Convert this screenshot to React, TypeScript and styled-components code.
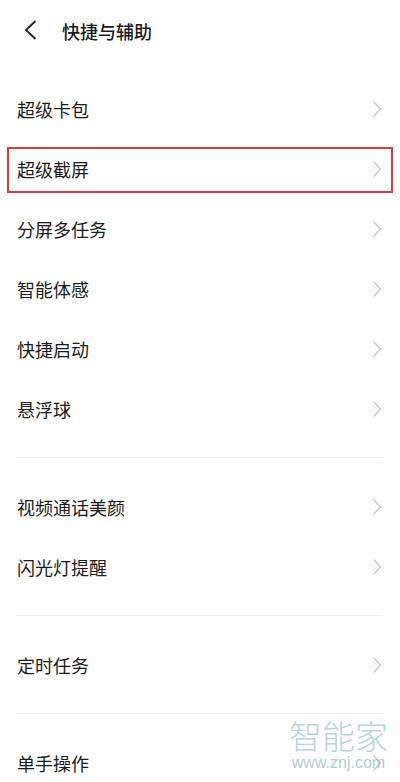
import styled, { createGlobalStyle, css } from "styled-components";

const GlobalStyle = createGlobalStyle`
  html, body {
    margin: 0;
    padding: 0;
    background: #ffffff;
    overflow: hidden;
  }
  body {
    font-family: "Noto Sans CJK SC", "Noto Sans", sans-serif;
  }
`;

const Page = styled.div`
  position: relative;
  width: 400px;
  height: 782px;
  overflow: hidden;
  background: #ffffff;
`;

const Header = styled.div`
  height: 60px;
  display: flex;
  align-items: center;
  padding-left: 24px;
  gap: 25px;
`;

const Title = styled.div`
  font-size: 18px;
  font-weight: 500;
  color: #1a1a1a;
  line-height: 1;
  margin-top: 1px;
`;

const Group = styled.div`
  padding: 19px 0 18px;
`;

const Divider = styled.div`
  height: 1px;
  margin: 0 17px 0 16px;
  background: #f0f0f0;
`;

const Row = styled.div<{ $highlight?: boolean }>`
  position: relative;
  height: 60px;
  display: flex;
  align-items: center;
  justify-content: space-between;
  padding: 0 18px 0 17px;

  ${(p) =>
    p.$highlight &&
    css`
      &::after {
        content: "";
        position: absolute;
        left: 7px;
        right: 7px;
        top: 8px;
        bottom: 6px;
        border: 2.5px solid #e5383d;
      }
    `}
`;

const Label = styled.span`
  font-size: 18px;
  color: #1c1c1c;
  line-height: 1;
`;

const Watermark = styled.div`
  position: absolute;
  left: 289px;
  top: 716px;
  display: flex;
  flex-direction: column;
  align-items: center;
  pointer-events: none;
`;

const WatermarkName = styled.div`
  font-family: "Noto Sans CJK SC", sans-serif;
  font-weight: 300;
  font-size: 33px;
  line-height: 38px;
  color: rgba(170, 205, 210, 0.85);
`;

const WatermarkUrl = styled.div`
  font-family: "Liberation Sans", Arial, sans-serif;
  font-size: 16px;
  line-height: 16px;
  margin-top: 1px;
  color: rgba(160, 195, 200, 0.85);
`;

const Back = () => (
  <svg width="13" height="20" viewBox="0 0 13 20">
    <polyline
      points="11,1.5 2,10 11,18.5"
      fill="none"
      stroke="#222"
      strokeWidth="1.8"
      strokeLinecap="round"
      strokeLinejoin="round"
    />
  </svg>
);

const Chevron = () => (
  <svg width="9" height="16" viewBox="0 0 9 16">
    <polyline
      points="1,1 7.5,8 1,15"
      fill="none"
      stroke="#c6c6c6"
      strokeWidth="1.3"
      strokeLinecap="round"
      strokeLinejoin="round"
    />
  </svg>
);

const groups: string[][] = [
  ["超级卡包", "超级截屏", "分屏多任务", "智能体感", "快捷启动", "悬浮球"],
  ["视频通话美颜", "闪光灯提醒"],
  ["定时任务"],
  ["单手操作"],
];

function App() {
  return (
    <Page>
      <GlobalStyle />
      <Header>
        <Back />
        <Title>快捷与辅助</Title>
      </Header>
      {groups.map((items, gi) => (
        <div key={gi}>
          {gi > 0 && <Divider />}
          <Group>
            {items.map((name) => (
              <Row key={name} $highlight={name === "超级截屏"}>
                <Label>{name}</Label>
                <Chevron />
              </Row>
            ))}
          </Group>
        </div>
      ))}
      <Watermark>
        <WatermarkName>智能家</WatermarkName>
        <WatermarkUrl>www.znj.com</WatermarkUrl>
      </Watermark>
    </Page>
  );
}

export default App;
